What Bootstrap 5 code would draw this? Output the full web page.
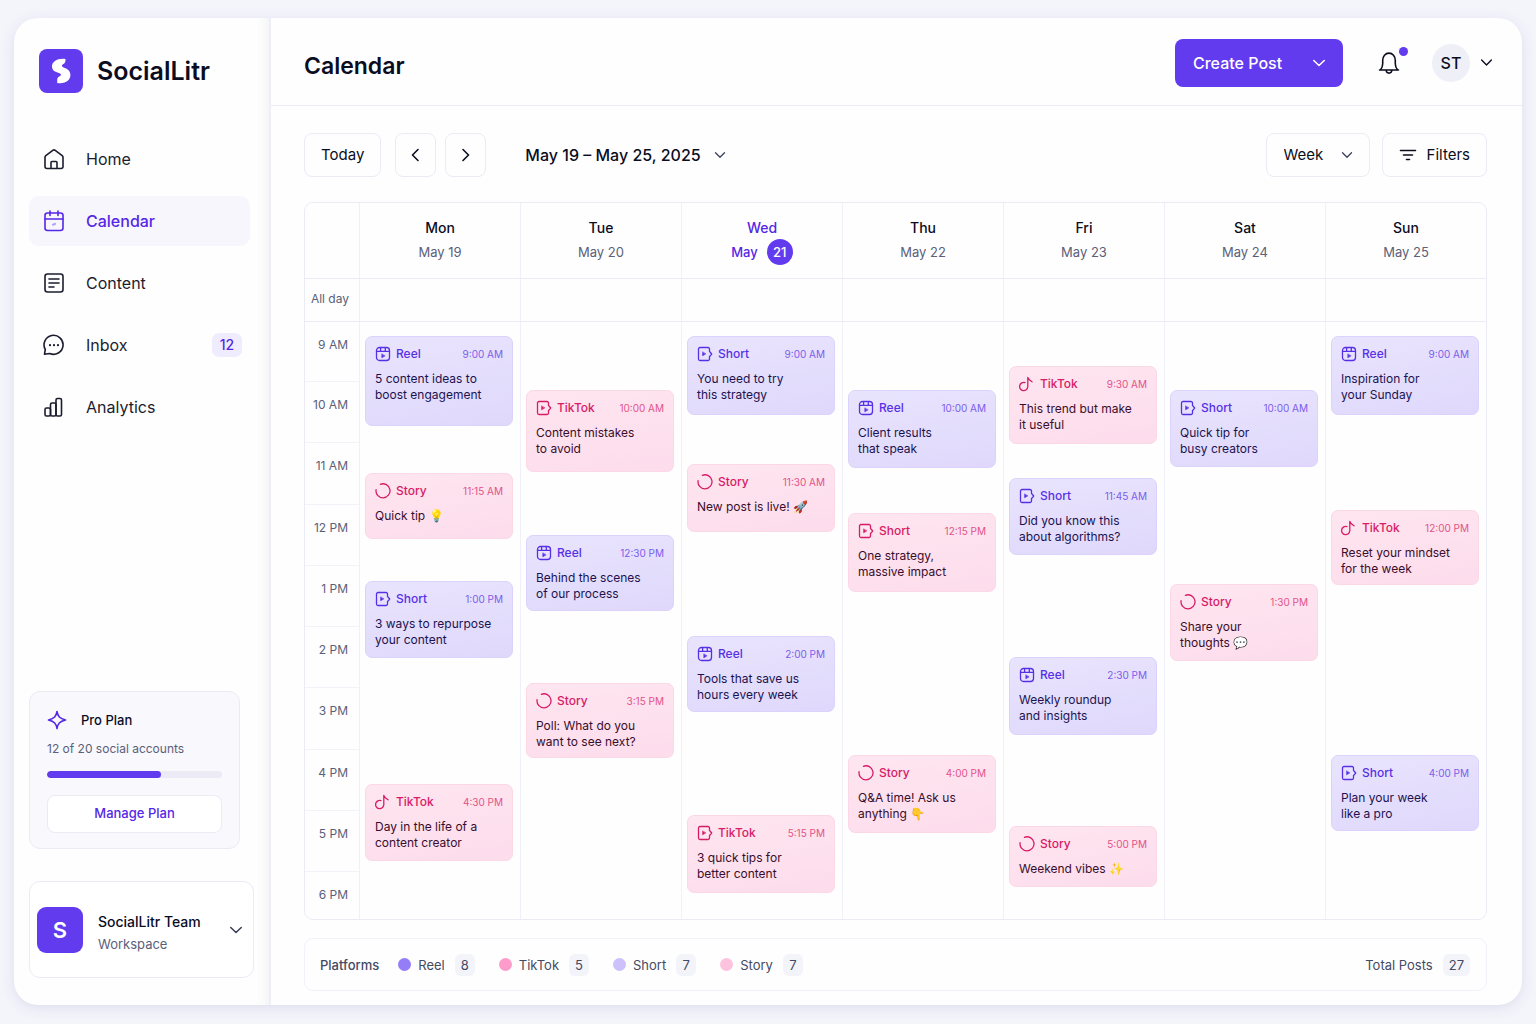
<!DOCTYPE html>
<html lang="en">
<head>
<meta charset="utf-8">
<meta name="viewport" content="width=device-width, initial-scale=1">
<title>SocialLitr – Calendar</title>
<link href="https://cdn.jsdelivr.net/npm/bootstrap@5.3.0/dist/css/bootstrap.min.css" rel="stylesheet">
<style>
:root{--ink:#0b0d1f;--slate:#5b6079;--brand:#5527e6;--brand-fill:#633bee;--line:#ebebf5;--soft:#f6f6fc}
body{font-family:Inter,"Noto Sans",sans-serif;background:#f4f5fb;color:var(--ink);font-size:15px;line-height:20px}
svg{fill:none;stroke:currentColor;stroke-width:1.6;stroke-linecap:round;stroke-linejoin:round;flex:none;display:block}
svg.brand-logo{stroke:none}
svg.chev{stroke-width:1.3}
a{color:inherit;text-decoration:none}
.page-wrap{min-height:100vh;padding:18px 14px 19px}
.app-shell{background:#fefefe;border-radius:24px;box-shadow:0 3px 14px rgba(70,70,140,.13);overflow:hidden}
.side-panel{width:257px;padding:31px 15px 27px;border-right:2px solid #efeff7;box-shadow:inset -14px 0 14px -14px rgba(80,80,140,.10)}
.brand-row{gap:14px;padding-left:10px;margin-bottom:41px;font-size:25px;line-height:30px;font-weight:600}
.side-nav{gap:12px;margin-right:4px}
.side-link{height:50px;border-radius:10px;padding:0 8px 0 14px;gap:21px;font-size:16px;color:#1b1d2e}
.side-link.active{background:var(--soft);color:var(--brand);font-weight:500}
.inbox-count{background:#efecfd;color:var(--brand);border-radius:7px;font-size:14px;font-weight:500;line-height:24px;width:30px;text-align:center}
.plan-box{background:#f8f8fd;border:1px solid var(--line);border-radius:11px;padding:18px 17px 15px;margin:0 14px 32px 0}
.plan-title{gap:14px;font-size:13px;font-weight:500}
.plan-title svg{color:var(--brand)}
.plan-note{font-size:12px;color:var(--slate);margin:9px 0 12px}
.plan-bar{height:7px;background:#ebeaf5;border-radius:4px;--bs-progress-bar-bg:#633bee}
.plan-bar .progress-bar{border-radius:4px}
.plan-btn{margin-top:17px;height:38px;font-size:13px;font-weight:500;color:var(--brand);background:#fff;border:1px solid var(--line);border-radius:8px;padding:0}
.team-btn{border:1px solid var(--line);border-radius:11px;background:#fff;height:97px;padding:0 10px 0 7px;gap:15px;color:var(--ink);text-align:left;width:100%}
.team-btn .chev,.range-btn .chev{color:#3b3f58}
.team-mark{width:46px;height:46px;border-radius:9px;background:var(--brand-fill);color:#fff;font-size:22px;font-weight:600;line-height:46px;text-align:center}
.team-text{padding-top:7px}
.team-name{font-size:14px;line-height:23px;font-weight:500}
.team-kind{font-size:13px;line-height:23px;color:var(--slate)}
.top-bar{height:88px;border-bottom:1px solid var(--line);padding:2px 29px 0 33px}
.top-bar h1{font-size:23px;line-height:30px;font-weight:600;margin:6px 0 0}
.create-btn{height:48px;width:168px;border-radius:8px;background:var(--brand-fill);color:#fff;font-size:16px;font-weight:500;padding:0 16px 0 17px}
.create-btn:hover{background:#5430d8;color:#fff}
.bell-btn{border:0;background:none;padding:0;margin-left:34px;color:var(--ink);position:relative}
.bell-dot{position:absolute;right:-7px;top:-3px;width:9px;height:9px;border-radius:50%;background:var(--brand-fill)}
.user-btn{border:0;background:none;padding:0;margin-left:31px;gap:10px;color:var(--ink)}
.user-pic{width:38px;height:38px;border-radius:50%;background:#efeff7;font-size:16px;font-weight:500;line-height:38px}
.work-area{padding:27px 35px 14px 33px}
.tool-btn{height:44px;border:1px solid var(--line);border-radius:8px;background:#fefefe;color:var(--ink);font-size:15px;font-weight:400;padding:0 16px}
.tool-btn:hover{background:var(--soft)}
.arrow-pair{gap:9px;margin-left:14px}
.nav-arrow{width:41px;padding:0}
.range-btn{border:0;font-size:16px;background:none;padding:0;gap:13px;color:var(--ink);margin-left:39px;font-weight:500}
.view-tools{gap:12px}
.filter-btn{gap:10px}
.week-pick{width:104px;padding:0 0 0 17px;background:#fefefe url("data:image/svg+xml,%3Csvg xmlns='http://www.w3.org/2000/svg' width='12' height='12' fill='none' stroke='%233b3f58' stroke-width='1.3' stroke-linecap='round' stroke-linejoin='round'%3E%3Cpath d='M1.500 3.800 6 8.200l4.500-4.400'/%3E%3C/svg%3E") no-repeat right 16px center/12px}
.cal-board{margin-top:25px;border:1px solid var(--line);border-radius:9px}
.cal-row{display:grid;grid-template-columns:54px repeat(7,minmax(0,1fr))}
.cal-row>*+*{border-left:1px solid #f0f0f8}
.cal-row+.cal-row{border-top:1px solid var(--line)}
.day-head{height:75px;text-align:center;padding-top:13px;font-size:14px;line-height:24px;font-weight:500}
.day-date{font-size:13px;color:var(--slate);font-weight:400;gap:9px;height:24px}
.today-col,.today-col .day-date{color:var(--brand);font-weight:500}
.today-num{width:26px;height:26px;border-radius:50%;background:var(--brand-fill);color:#fff;line-height:26px}
.allday-cell{height:42px;font-size:12px;line-height:40px;color:var(--slate);text-align:right;padding-right:10px}
.hour-list{min-height:597px}
.hour-cell{flex:1 1 61px;text-align:right;padding:13px 11px 0 0;font-size:12px;color:var(--slate);border-bottom:1px solid #f2f2f8}
.hour-cell:first-child{flex:0 0 60px}
.hour-cell:last-child{flex:0 0 47px;border-bottom:0}
.day-lane{display:grid;grid-template-rows:repeat(597,minmax(0,1fr));padding:0 7px 0 5px}
.post-card{border:1px solid;border-radius:7px;padding:9px 9px 0 9px;font-size:12px;line-height:16px;overflow:hidden}
.post-card svg{width:16px;height:16px;stroke-width:1.3}
.post-top{height:16px;gap:5px;font-weight:500;margin-bottom:9px}
.post-top time{margin-left:auto;font-size:10px;font-weight:400;opacity:.75}
.tone-violet{background:linear-gradient(170deg,#e9e4fd,#dfd8fc);border-color:#dbd3fb;color:#1c1250}
.tone-violet .post-top{color:#5730e6}
.tone-pink{background:linear-gradient(170deg,#fee6f0,#fddcec);border-color:#fcd7e6;color:#3a0d2c}
.tone-pink .post-top{color:#d81b66}
.legend-bar{margin-top:18px;border:1px solid #f1f1f8;border-radius:9px;min-height:53px;padding:0 16px 0 15px;font-size:13px;color:#454a63}
.legend-title{font-weight:500;margin-right:19px}
.legend-item{gap:7px;margin-right:24px}
.legend-dot{width:13px;height:13px;border-radius:50%}
.legend-num{background:#f3f3fa;border-radius:6px;line-height:22px;min-width:20px;padding:0 6px;text-align:center;margin-left:3px;font-size:13px}
.legend-total{gap:7px}
</style>
<script src="https://cdn.jsdelivr.net/npm/bootstrap@5.3.0/dist/js/bootstrap.bundle.min.js" defer></script>
</head>
<body>
<svg class="d-none" aria-hidden="true">
  <symbol id="i-down" viewBox="0 0 12 12"><path d="M1.500 3.800 6 8.200l4.500-4.400"/></symbol>
  <symbol id="i-reel" viewBox="0 0 16 16"><rect x="1.500" y="1.500" width="13" height="13" rx="3"/><path d="M1.500 5.300h13M5.600 1.700v3.400M10.300 1.700v3.400"/><path d="M6.800 8.200v3.600l3-1.800z" fill="currentColor" stroke-width=".6"/></symbol>
  <symbol id="i-short" viewBox="0 0 16 16"><path d="M12.500 5.500V3A1.500 1.500 0 0 0 11 1.500H3A1.500 1.500 0 0 0 1.500 3v10A1.500 1.500 0 0 0 3 14.500h8a1.500 1.500 0 0 0 1.500-1.500v-2.500M13 6l1.700 2L13 10"/><path d="M5.600 6.200v3.600l3-1.800z" fill="currentColor" stroke-width=".6"/></symbol>
  <symbol id="i-story" viewBox="0 0 16 16"><path d="M5.400 1.300A7 7 0 1 1 1.100 6.600"/></symbol>
  <symbol id="i-tiktok" viewBox="0 0 16 16"><path d="M6 6.600A4.100 4.100 0 1 0 8.800 10.800V1.300c.5 2 1.900 3.100 4.200 4.500"/></symbol>
</svg>
<div class="page-wrap d-flex">
<div class="app-shell d-flex flex-grow-1">
  <aside class="side-panel d-flex flex-column flex-shrink-0">
    <a href="#" class="brand-row d-flex align-items-center">
      <svg class="brand-logo" width="44" height="44" viewBox="0 0 44 44"><rect width="44" height="44" rx="8" fill="#633bee"/><path d="M26.500 10.100c-7-1.200-14 2.200-13.500 8 .4 4 4 5.200 7.500 6.200 1.700.5 2 2.300.2 3-1.300.6-2.500 1.700-2.500 3.600v3c8 1.200 13.600-2.400 13.200-8.500-.3-4-3.100-5.700-6.900-7-1.800-.6-2.200-2.300-.5-3.100 1.800-.8 2.700-2.200 2.500-5.200z" fill="#fff"/></svg>
      <span>SocialLitr</span>
    </a>
    <nav class="side-nav d-flex flex-column" aria-label="Main">
      <a href="#" class="side-link d-flex align-items-center"><svg width="22" height="22" viewBox="0 0 22 22"><path d="M2 9.300a2 2 0 0 1 .8-1.600L9.800 2.300a2 2 0 0 1 2.400 0l7 5.400a2 2 0 0 1 .8 1.600v9.200a2 2 0 0 1-2 2H4a2 2 0 0 1-2-2zM8 20.300v-5.800a1 1 0 0 1 1-1h4a1 1 0 0 1 1 1v5.800"/></svg>Home</a>
      <a href="#" class="side-link active d-flex align-items-center" aria-current="page"><svg width="22" height="22" viewBox="0 0 22 22"><rect x="2" y="3" width="18" height="17.500" rx="2.500"/><path d="M2 9h18M7 1v4.500M15 1v4.500"/><path d="M10 14.700l2-.8" stroke-width="2.200" opacity=".4"/></svg>Calendar</a>
      <a href="#" class="side-link d-flex align-items-center"><svg width="22" height="22" viewBox="0 0 22 22"><rect x="2" y="2" width="18" height="18" rx="2.500"/><path d="M6 7h10M6 11h10M6 15h5"/></svg>Content</a>
      <a href="#" class="side-link d-flex align-items-center"><svg width="22" height="22" viewBox="0 0 22 22"><path d="M2.300 15.500A9.500 9.500 0 1 1 6.700 19.500L1.500 20.200z"/><path d="M7 11.200h.01M11 11.200h.01M15 11.200h.01" stroke-width="2.200"/></svg>Inbox<span class="inbox-count ms-auto">12</span></a>
      <a href="#" class="side-link d-flex align-items-center"><svg width="22" height="22" viewBox="0 0 22 22"><rect x="2" y="12" width="5.500" height="8" rx="1.500"/><rect x="7.500" y="7" width="5.500" height="13" rx="1.500"/><rect x="13" y="2.500" width="5.500" height="17.500" rx="1.500"/></svg>Analytics</a>
    </nav>
    <section class="plan-box mt-auto">
      <div class="plan-title d-flex align-items-center"><svg width="20" height="20" viewBox="0 0 20 20"><path d="M10 1.500c.9 5 2.500 7 8.500 8.500-6 1.500-7.600 3.500-8.500 8.500-.9-5-2.500-7-8.500-8.500 6-1.500 7.600-3.500 8.500-8.500z"/></svg>Pro Plan</div>
      <p class="plan-note">12 of 20 social accounts</p>
      <div class="progress plan-bar" role="progressbar" aria-label="Social accounts used" aria-valuenow="65" aria-valuemin="0" aria-valuemax="100"><div class="progress-bar" style="width:65%"></div></div>
      <button type="button" class="btn plan-btn w-100">Manage Plan</button>
    </section>
    <button type="button" class="team-btn d-flex align-items-center">
      <span class="team-mark">S</span>
      <span class="team-text"><span class="team-name d-block">SocialLitr Team</span><span class="team-kind d-block">Workspace</span></span>
      <svg class="chev ms-auto" width="14" height="14"><use href="#i-down"/></svg>
    </button>
  </aside>
  <main class="flex-grow-1 d-flex flex-column">
    <header class="top-bar d-flex align-items-center">
      <h1>Calendar</h1>
      <button type="button" class="btn create-btn ms-auto d-flex align-items-center justify-content-between">Create Post<svg class="chev" width="14" height="14"><use href="#i-down"/></svg></button>
      <button type="button" class="bell-btn" aria-label="Notifications"><svg width="24" height="26" viewBox="0 0 24 26"><path d="M2.500 20h19M3.500 19.800c1.700-1.800 2.200-3.500 2.200-6v-3.500c0-4 2.700-7.200 6.300-7.200s6.300 3.200 6.300 7.200v3.500c0 2.500.5 4.200 2.200 6M9.200 20.500c.2 1.700 1.300 2.600 2.800 2.600s2.600-.9 2.800-2.600"/></svg><span class="bell-dot"></span></button>
      <button type="button" class="user-btn d-flex align-items-center"><span class="user-pic">ST</span><svg class="chev" width="13" height="13"><use href="#i-down"/></svg></button>
    </header>
    <div class="work-area">
      <div class="d-flex align-items-center">
        <button type="button" class="btn tool-btn">Today</button>
        <div class="arrow-pair d-flex">
          <button type="button" class="btn tool-btn nav-arrow d-flex align-items-center justify-content-center" aria-label="Previous week"><svg width="16" height="16"><path d="M10 2.500 4.500 8l5.500 5.500"/></svg></button>
          <button type="button" class="btn tool-btn nav-arrow d-flex align-items-center justify-content-center" aria-label="Next week"><svg width="16" height="16"><path d="M5 2.500 10.500 8 5 13.500"/></svg></button>
        </div>
        <button type="button" class="range-btn d-flex align-items-center">May 19 – May 25, 2025<svg class="chev" width="12" height="12"><use href="#i-down"/></svg></button>
        <div class="view-tools d-flex ms-auto">
          <select class="form-select tool-btn week-pick" aria-label="View"><option>Week</option><option>Month</option></select>
          <button type="button" class="btn tool-btn filter-btn d-flex align-items-center"><svg width="18" height="16" viewBox="0 0 18 16"><path d="M1.500 3.500h15M4.500 8h9M7.500 12.500h3"/></svg>Filters</button>
        </div>
      </div>

      <section class="cal-board" aria-label="Week of May 19">
        <div class="cal-row">
          <div></div>
          <div class="day-head">Mon<div class="day-date">May 19</div></div>
          <div class="day-head">Tue<div class="day-date">May 20</div></div>
          <div class="day-head today-col">Wed<div class="day-date d-flex align-items-center justify-content-center">May <span class="today-num">21</span></div></div>
          <div class="day-head">Thu<div class="day-date">May 22</div></div>
          <div class="day-head">Fri<div class="day-date">May 23</div></div>
          <div class="day-head">Sat<div class="day-date">May 24</div></div>
          <div class="day-head">Sun<div class="day-date">May 25</div></div>
        </div>
        <div class="cal-row">
          <div class="allday-cell text-nowrap">All day</div><div></div><div></div><div></div><div></div><div></div><div></div><div></div>
        </div>
        <div class="cal-row">
          <div class="hour-list d-flex flex-column">
            <div class="hour-cell">9 AM</div><div class="hour-cell">10 AM</div><div class="hour-cell">11 AM</div><div class="hour-cell">12 PM</div><div class="hour-cell">1 PM</div><div class="hour-cell">2 PM</div><div class="hour-cell">3 PM</div><div class="hour-cell">4 PM</div><div class="hour-cell">5 PM</div><div class="hour-cell">6 PM</div>
          </div>
          <div class="day-lane">
            <a href="#" class="post-card tone-violet" style="grid-row:15/span 90"><div class="post-top d-flex align-items-center"><svg><use href="#i-reel"/></svg>Reel<time>9:00 AM</time></div>5 content ideas to<br>boost engagement</a>
            <a href="#" class="post-card tone-pink" style="grid-row:152/span 66"><div class="post-top d-flex align-items-center"><svg><use href="#i-story"/></svg>Story<time>11:15 AM</time></div>Quick tip 💡</a>
            <a href="#" class="post-card tone-violet" style="grid-row:260/span 77"><div class="post-top d-flex align-items-center"><svg><use href="#i-short"/></svg>Short<time>1:00 PM</time></div>3 ways to repurpose<br>your content</a>
            <a href="#" class="post-card tone-pink" style="grid-row:463/span 77"><div class="post-top d-flex align-items-center"><svg><use href="#i-tiktok"/></svg>TikTok<time>4:30 PM</time></div>Day in the life of a<br>content creator</a>
          </div>
          <div class="day-lane">
            <a href="#" class="post-card tone-pink" style="grid-row:69/span 82"><div class="post-top d-flex align-items-center"><svg><use href="#i-short"/></svg>TikTok<time>10:00 AM</time></div>Content mistakes<br>to avoid</a>
            <a href="#" class="post-card tone-violet" style="grid-row:214/span 76"><div class="post-top d-flex align-items-center"><svg><use href="#i-reel"/></svg>Reel<time>12:30 PM</time></div>Behind the scenes<br>of our process</a>
            <a href="#" class="post-card tone-pink" style="grid-row:362/span 75"><div class="post-top d-flex align-items-center"><svg><use href="#i-story"/></svg>Story<time>3:15 PM</time></div>Poll: What do you<br>want to see next?</a>
          </div>
          <div class="day-lane">
            <a href="#" class="post-card tone-violet" style="grid-row:15/span 79"><div class="post-top d-flex align-items-center"><svg><use href="#i-short"/></svg>Short<time>9:00 AM</time></div>You need to try<br>this strategy</a>
            <a href="#" class="post-card tone-pink" style="grid-row:143/span 68"><div class="post-top d-flex align-items-center"><svg><use href="#i-story"/></svg>Story<time>11:30 AM</time></div>New post is live! 🚀</a>
            <a href="#" class="post-card tone-violet" style="grid-row:315/span 76"><div class="post-top d-flex align-items-center"><svg><use href="#i-reel"/></svg>Reel<time>2:00 PM</time></div>Tools that save us<br>hours every week</a>
            <a href="#" class="post-card tone-pink" style="grid-row:494/span 78"><div class="post-top d-flex align-items-center"><svg><use href="#i-short"/></svg>TikTok<time>5:15 PM</time></div>3 quick tips for<br>better content</a>
          </div>
          <div class="day-lane">
            <a href="#" class="post-card tone-violet" style="grid-row:69/span 78"><div class="post-top d-flex align-items-center"><svg><use href="#i-reel"/></svg>Reel<time>10:00 AM</time></div>Client results<br>that speak</a>
            <a href="#" class="post-card tone-pink" style="grid-row:192/span 79"><div class="post-top d-flex align-items-center"><svg><use href="#i-short"/></svg>Short<time>12:15 PM</time></div>One strategy,<br>massive impact</a>
            <a href="#" class="post-card tone-pink" style="grid-row:434/span 78"><div class="post-top d-flex align-items-center"><svg><use href="#i-story"/></svg>Story<time>4:00 PM</time></div>Q&amp;A time! Ask us<br>anything 👇</a>
          </div>
          <div class="day-lane">
            <a href="#" class="post-card tone-pink" style="grid-row:45/span 78"><div class="post-top d-flex align-items-center"><svg><use href="#i-tiktok"/></svg>TikTok<time>9:30 AM</time></div>This trend but make<br>it useful</a>
            <a href="#" class="post-card tone-violet" style="grid-row:157/span 77"><div class="post-top d-flex align-items-center"><svg><use href="#i-short"/></svg>Short<time>11:45 AM</time></div>Did you know this<br>about algorithms?</a>
            <a href="#" class="post-card tone-violet" style="grid-row:336/span 78"><div class="post-top d-flex align-items-center"><svg><use href="#i-reel"/></svg>Reel<time>2:30 PM</time></div>Weekly roundup<br>and insights</a>
            <a href="#" class="post-card tone-pink" style="grid-row:505/span 61"><div class="post-top d-flex align-items-center"><svg><use href="#i-story"/></svg>Story<time>5:00 PM</time></div>Weekend vibes ✨</a>
          </div>
          <div class="day-lane">
            <a href="#" class="post-card tone-violet" style="grid-row:69/span 77"><div class="post-top d-flex align-items-center"><svg><use href="#i-short"/></svg>Short<time>10:00 AM</time></div>Quick tip for<br>busy creators</a>
            <a href="#" class="post-card tone-pink" style="grid-row:263/span 77"><div class="post-top d-flex align-items-center"><svg><use href="#i-story"/></svg>Story<time>1:30 PM</time></div>Share your<br>thoughts 💬</a>
          </div>
          <div class="day-lane">
            <a href="#" class="post-card tone-violet" style="grid-row:15/span 79"><div class="post-top d-flex align-items-center"><svg><use href="#i-reel"/></svg>Reel<time>9:00 AM</time></div>Inspiration for<br>your Sunday</a>
            <a href="#" class="post-card tone-pink" style="grid-row:189/span 75"><div class="post-top d-flex align-items-center"><svg><use href="#i-tiktok"/></svg>TikTok<time>12:00 PM</time></div>Reset your mindset<br>for the week</a>
            <a href="#" class="post-card tone-violet" style="grid-row:434/span 76"><div class="post-top d-flex align-items-center"><svg><use href="#i-short"/></svg>Short<time>4:00 PM</time></div>Plan your week<br>like a pro</a>
          </div>
        </div>
      </section>

      <footer class="legend-bar d-flex align-items-center">
        <span class="legend-title">Platforms</span>
        <span class="legend-item d-flex align-items-center"><span class="legend-dot" style="background:#967df8"></span>Reel<span class="legend-num">8</span></span>
        <span class="legend-item d-flex align-items-center"><span class="legend-dot" style="background:#fd9bca"></span>TikTok<span class="legend-num">5</span></span>
        <span class="legend-item d-flex align-items-center"><span class="legend-dot" style="background:#cdc1fc"></span>Short<span class="legend-num">7</span></span>
        <span class="legend-item d-flex align-items-center"><span class="legend-dot" style="background:#fdc3de"></span>Story<span class="legend-num">7</span></span>
        <span class="legend-total d-flex align-items-center ms-auto">Total Posts<span class="legend-num">27</span></span>
      </footer>
    </div>
  </main>
</div>
</div>
</body>
</html>
